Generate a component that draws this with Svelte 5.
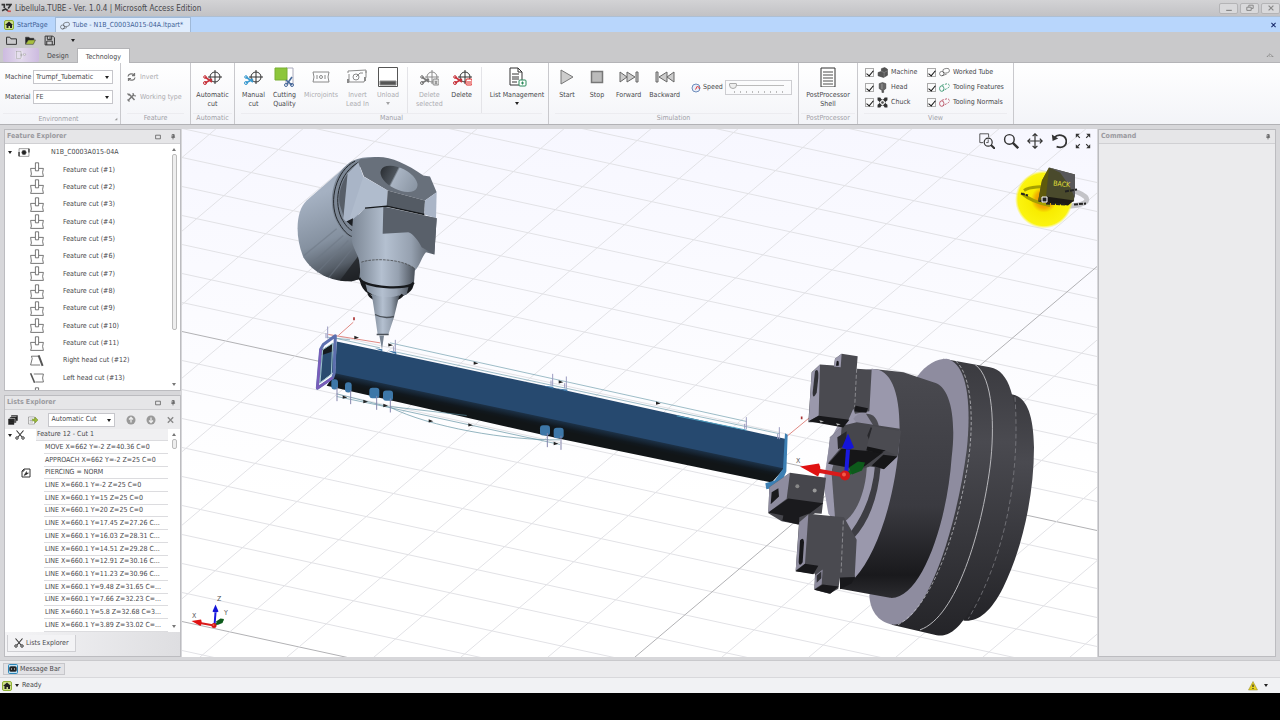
<script lang="ts">
    type Command = { label: string; icon: string; disabled?: boolean; menu?: boolean };

    const target =
        '<circle cx="13" cy="10" r="5"/><path d="M13 3v14M6 10h14"/>';
    const scissors = (c: string) =>
        `<path stroke="${c}" stroke-width="1.6" d="M3 10l7 5M3 16l7-4"/><circle cx="3" cy="10" r="1.3" stroke="${c}"/><circle cx="3" cy="16" r="1.5" stroke="${c}"/>`;

    const icons: Record<string, string> = {
        autoCut: target + scissors("#c8313a"),
        manualCut: target + scissors("#3a9ad0"),
        deleteSelected:
            target + scissors("#777") + '<rect x="14" y="12" width="6" height="6" rx="1" fill="#ddd"/><path d="M16 14l2 3m0-3l-2 3"/>',
        deleteCut:
            target + scissors("#c8313a") + '<rect x="14" y="12" width="6" height="6" rx="1" fill="#fff" stroke="#d22"/><path stroke="#d22" d="M16 14v3m2-3v3"/>',
        quality:
            '<path fill="#fff" stroke="#aab" d="M12 1h7v16h-7z"/><path fill="#8cc63a" stroke="#79ae32" d="M1 1h12v12H1z"/><path stroke="#47699a" stroke-width="1.6" d="M18 10l-5 7M12 13l6 5"/><circle cx="12" cy="18" r="1.5" stroke="#47699a"/><circle cx="18" cy="18" r="1.5" stroke="#47699a"/>',
        micro:
            '<path d="M2 5h16l-1 5 1 5H2l1-5z"/><circle cx="10" cy="10" r="1.500"/><path d="M6 8v4m8-4v4"/>',
        lead: '<path d="M1 6V4l18-1v3M2 7v8h15l2-5V4"/><circle cx="9" cy="10" r="3"/><path d="M9 10l4-4h3"/><path stroke-width="2" d="M1 12v4m17-6v4"/>',
        unload: '<path stroke="#555" fill="#fff" d="M0.500 0.500h19v19h-19z"/><path fill="#555" d="M2 14h16v4H2z"/>',
        list: '<path fill="#fff" d="M3 1h8l4 4v13H3z"/><path d="M11 1v4h4M5 7h7M5 10h7M5 12h7M5 15h5"/><rect x="12" y="13" width="7" height="6" rx="1" fill="#fff" stroke="#2b8a5b"/><path stroke="#2b8a5b" d="M15.500 14.500v3M14 16h3"/>',
        start: '<path fill="#ccc" stroke="#777" d="M4 3l12 7-12 7z"/>',
        stop: '<path fill="#bbb" stroke="#777" stroke-width="1.500" d="M4.500 4.500h11v11h-11z"/>',
        forward: '<path fill="#ccc" stroke="#666" d="M1 5l7 5-7 5zM8 5l8 5-8 5zM17 5h2v10h-2z"/>',
        backward: '<path fill="#ccc" stroke="#666" d="M19 5l-7 5 7 5zM12 5l-8 5 8 5zM1 5h2v10H1z"/>',
        shell: '<path fill="#fff" stroke="#333" d="M3 1h14v19H3z"/><path stroke="#888" stroke-width="1.500" d="M5 5h10M5 8h10M5 11h10M5 14h10M5 17h10"/>',
        house: '<rect x="1" y="1" width="18" height="18" rx="3" fill="#cfe08a" stroke="#8fb135" stroke-width="2"/><path fill="#222" stroke="none" d="M10 3l8 7h-2v6h-4v-4H9v4H5v-6H2z"/>',
        tube: '<rect x="7" y="3" width="12" height="8" rx="4" transform="rotate(-10 12 7)"/><ellipse cx="5" cy="12" rx="4" ry="4"/><path d="M5 16l9-3"/>',
        tubeGreen: '<g stroke="#2e9268" stroke-width="1.500"><ellipse cx="5" cy="12" rx="4" ry="5"/><path d="M5 6l10-3c5 1 5 6 1 8l-9 5" stroke-dasharray="4 2"/></g>',
        tubeRed: '<g stroke="#b5475a" stroke-width="1.500"><ellipse cx="5" cy="12" rx="4" ry="5"/><path d="M5 6l10-3c5 1 5 6 1 8l-9 5" stroke-dasharray="4 2"/></g>',
        folder: '<path stroke-width="1.800" d="M1 16V4h6l2 3h10v10H1z"/>',
        folderOpen: '<path fill="#222" d="M1 16V4h6l2 2h7v3H7z"/><path fill="#a7bf3f" d="M1 17l5-8h13l-4 8z"/>',
        save: '<path stroke-width="1.800" d="M2 2h14l3 3v13H2zM6 2v6h8V2M5 18v-7h10v7M11 4v3"/>',
        appMenu: '<path stroke="#fff" fill="#e6dfee" d="M0 3h12v14H0z"/><rect x="1" y="3" width="9" height="14"/><path d="M8 10h5m-2-3v6"/><path fill="#fff" d="M14 8h6l-3 4z"/>',
        invert: '<g stroke-width="2.500"><path d="M3 9c1-6 9-7 12-3M17 11c-1 6-9 7-12 3"/><path d="M16 2v5h-5M4 18v-5h5"/></g>',
        working: '<path stroke-width="3" d="M4 16L15 5M5 4l11 12"/><path stroke-width="2.500" d="M13 2l1 5 5 1M2 3l4 4M2 15l4 4"/>',
        gauge: '<circle cx="10" cy="10" r="8" fill="#e8eef8" stroke="#6e8cbc" stroke-width="2"/><path stroke="#d33" stroke-width="2" d="M9 13l4-7M15 7l2 5"/>',
        machine: '<path fill="#555" stroke="#333" d="M2 10l6-2V3l6-2 5 3v11l-7 4-10-3z"/><path stroke="#999" d="M8 8l5 2 6-3M13 10v8"/>',
        head: '<path fill="#666" stroke="#333" d="M4 3l6-2 6 2v9l-4 3v4H9v-4l-5-3z"/><path stroke="#ccc" d="M9 3v10"/>',
        chuck: '<path fill="#333" stroke="none" d="M1 1h5l2 3h4l2-3h5v5l-3 2v4l3 2v5h-5l-2-3H8l-2 3H1v-5l3-2V8L1 6z"/><path fill="#fff" stroke="none" d="M10 4l6 6-6 6-6-6z"/><circle cx="10" cy="10" r="2" fill="#555"/>',
        part: '<path fill="#fff" d="M1 3h18v14H1z"/><circle cx="10" cy="10" r="4" fill="#222"/><path stroke-width="3" d="M1 9v8M19 3v7"/>',
        feature: '<path d="M2 8h6V1h4v7h6M8 8v3h4V8M18 8l-1 5 1 5H2l1-3-1-7"/>',
        rightCut: '<path d="M13 4H3l1 3-2 8h12"/><path stroke-width="2.500" d="M12 3l5 13"/>',
        leftCut: '<path d="M6 5h12l-1 5 1 5H8"/><path stroke-width="2" d="M2 4l5 12"/>',
        cutter: '<path stroke-width="2.200" d="M3 1l11 13M17 1L6 14"/><circle cx="4" cy="16" r="2.500" stroke-width="2"/><circle cx="16" cy="16" r="2.500" stroke-width="2"/>',
        pierce: '<path stroke-width="2" d="M6 2h12v16H2V6zM6 2v4H2"/><path fill="#222" stroke-width="1" d="M6 15l5-8v3h4l-4 3z"/>',
        copies: '<path fill="#222" d="M7 1h12v10H7zM4 5h12v10H4zM1 8h11v11H1z"/><path stroke="#eee" d="M4 7h10v8M7 3h10"/>',
        insert: '<path fill="#fff" stroke="#666" d="M1 4h12v14H1z"/><path stroke="#666" d="M3 8h7M3 11h5M3 14h7"/><path fill="#9bb93a" stroke="#72902a" d="M9 8h5V4l6 6-6 6v-4H9z"/>',
        up: '<circle cx="10" cy="10" r="9" fill="#999" stroke="none"/><path stroke="#eee" stroke-width="2.500" d="M10 15V6M6 9l4-4 4 4"/>',
        down: '<circle cx="10" cy="10" r="9" fill="#999" stroke="none"/><path stroke="#eee" stroke-width="2.500" d="M10 5v9M6 11l4 4 4-4"/>',
        cross: '<path stroke-width="3" d="M4 4l12 12M16 4L4 16"/>',
        minimise: '<path stroke-width="3" d="M3 16h14"/>',
        restore: '<path stroke-width="2.500" d="M7 7V3h11v8h-5M2 8h11v8H2z"/>',
        pin: '<path stroke-width="2.500" d="M7 2h7v8H7zM4 11h13M10 11v7M12 2v8"/>',
        float: '<path stroke-width="2.500" d="M2 4h16v12H2z"/>',
        message: '<rect x="1" y="1" width="18" height="18" rx="2" fill="#bfe2f5" stroke="#2b86b8" stroke-width="2"/><rect x="3" y="5" width="14" height="10" rx="3" fill="#222"/><path stroke="#fff" stroke-width="2" d="M6 10h2M12 10h2"/>',
        warning: '<path fill="#e8d21c" stroke="#8d8428" d="M10 1l9 17H1z"/><path stroke-width="2.500" d="M10 7v5M10 14v2"/>',
        zoomWindow: '<path d="M5 12H1V1h11v4"/><circle cx="11.500" cy="11.500" r="5" stroke-width="1.500"/><path stroke-width="2.500" d="M15 15l5 5"/><path d="M11.500 8v4H9"/>',
        zoom: '<circle cx="8" cy="8" r="6" stroke-width="1.800"/><path stroke-width="3" d="M12 12l7 7"/>',
        pan: '<path stroke-width="1.500" d="M10 1v18M1 10h18M7 4l3-3 3 3M7 16l3 3 3-3M4 7l-3 3 3 3M16 7l3 3-3 3"/>',
        rotate: '<path stroke-width="2.200" d="M4 6c5-6 14-3 15 3s-4 11-12 8"/><path fill="#333" stroke="none" d="M1 2l1 8 7-3z"/>',
        fit: '<path stroke-width="1.500" d="M6 6L3 3m11 3l3-3M6 14l-3 3m11-3l3 3"/><path fill="#333" stroke="none" d="M1 1h5L1 6zM19 1v5l-5-5zM1 19v-5l5 5zM19 19h-5l5-5z"/>',
    };

    const manual: Command[][] = [
        [
            { label: "Manual\ncut", icon: "manualCut" },
            { label: "Cutting\nQuality", icon: "quality" },
            { label: "Microjoints", icon: "micro", disabled: true },
            { label: "Invert\nLead In", icon: "lead", disabled: true },
            { label: "Unload", icon: "unload", disabled: true, menu: true },
        ],
        [
            { label: "Delete\nselected", icon: "deleteSelected", disabled: true },
            { label: "Delete", icon: "deleteCut" },
        ],
        [{ label: "List Management", icon: "list", menu: true }],
    ];
    const simulation: Command[] = [
        { label: "Start", icon: "start" },
        { label: "Stop", icon: "stop" },
        { label: "Forward", icon: "forward" },
        { label: "Backward", icon: "backward" },
    ];
    const views = [
        { label: "Machine", icon: "machine" },
        { label: "Head", icon: "head" },
        { label: "Chuck", icon: "chuck" },
        { label: "Worked Tube", icon: "tube" },
        { label: "Tooling Features", icon: "tubeGreen" },
        { label: "Tooling Normals", icon: "tubeRed" },
    ];

    const features = [
        ...Array.from({ length: 11 }, (_, i) => ({ label: `Feature cut (#${i + 1})`, icon: "feature" })),
        { label: "Right head cut (#12)", icon: "rightCut" },
        { label: "Left head cut (#13)", icon: "leftCut" },
    ];

    const steps = [
        "MOVE X=662 Y=-2 Z=40.36 C=0",
        "APPROACH X=662 Y=-2 Z=25 C=0",
        "PIERCING = NORM",
        "LINE X=660.1 Y=-2 Z=25 C=0",
        "LINE X=660.1 Y=15 Z=25 C=0",
        "LINE X=660.1 Y=20 Z=25 C=0",
        "LINE X=660.1 Y=17.45 Z=27.26 C...",
        "LINE X=660.1 Y=16.03 Z=28.31 C...",
        "LINE X=660.1 Y=14.51 Z=29.28 C...",
        "LINE X=660.1 Y=12.91 Z=30.16 C...",
        "LINE X=660.1 Y=11.23 Z=30.96 C...",
        "LINE X=660.1 Y=9.48 Z=31.65 C=...",
        "LINE X=660.1 Y=7.66 Z=32.23 C=...",
        "LINE X=660.1 Y=5.8 Z=32.68 C=3...",
        "LINE X=660.1 Y=3.89 Z=33.02 C=...",
    ];

    const viewTools = [
        { label: "Zoom window", icon: "zoomWindow" },
        { label: "Zoom", icon: "zoom" },
        { label: "Pan", icon: "pan" },
        { label: "Rotate", icon: "rotate" },
        { label: "Fit", icon: "fit" },
    ];

    // floor grid: two families of parallel lines
    const shallow = Array.from({ length: 24 }, (_, i) => 331 + (i - 12) * 29);
    const steep = Array.from({ length: 20 }, (_, i) => 175 + (i - 2) * 87);

    // small blue joints under the tube, and the normals and arrows along the path
    const joints = [[104, 222, 10], [145, 231, 10], [223, 248, 15], [264, 256, 15], [735, 360, 15], [776, 368, 15]];
    const normals = [[286, 88], [758, 190], [799, 198], [1339, 320], [1438, 350], [83, 48]];
    const arrows = [[170, 81], [272, 103], [528, 158], [783, 214], [1075, 278], [135, 260], [197, 273], [257, 285], [393, 331], [512, 343], [768, 399]];

    let speed = $state(5);
</script>

{#snippet icon(name: string)}
    <svg class="icon" viewBox="0 0 20 20" aria-hidden="true">{@html icons[name]}</svg>
{/snippet}

{#snippet command(c: Command)}
    <button class="command" disabled={c.disabled}>
        {@render icon(c.icon)}
        <span>{c.label}</span>
        {#if c.menu}<i class="caret"></i>{/if}
    </button>
{/snippet}

{#snippet triad(x: number, y: number, s: number)}
    <g transform={`translate(${x} ${y}) scale(${s})`}>
        <path d="M0 0L18-11" stroke="#0a6a1a" stroke-width="4" />
        <path d="M4-8l9-6 7 1-3 8-10 4z" fill="#0d5a1b" />
        <path d="M1 0L3-26" stroke="#1a1ae0" stroke-width="4" />
        <path d="M-3-28L3-42 9-28Q3-24-3-28z" fill="#1414d8" />
        <path d="M0 0L-28-5" stroke="#d81a1a" stroke-width="4" />
        <path d="M-26-12L-45-9-27 1Q-23-6-26-12z" fill="#e01212" />
        <circle r="5" fill="#d01818" />
        <circle cx="-1" cy="-1" r="2" fill="#f05a4a" />
    </g>
{/snippet}

<div class="app">
    <header class="title">
        <svg class="logo" viewBox="0 0 20 20" aria-hidden="true">
            <path d="M1 3h5v6M9 3h9l-5 7M2 14l6-3 5 3" stroke="#333" stroke-width="3" fill="none" />
            <path d="M12 15h6" stroke="#c55" stroke-width="3" />
        </svg>
        <span>Libellula.TUBE - Ver. 1.0.4 | Microsoft Access Edition</span>
        <div class="window-buttons">
            <button aria-label="Minimise">{@render icon("minimise")}</button>
            <button aria-label="Restore">{@render icon("restore")}</button>
            <button aria-label="Close">{@render icon("cross")}</button>
        </div>
    </header>

    <nav class="documents">
        <a href="#start">{@render icon("house")}StartPage</a>
        <a href="#part" class="open">{@render icon("tube")}Tube - N1B_C0003A015-04A.ltpart*</a>
        <button aria-label="Close document">{@render icon("cross")}</button>
    </nav>

    <div class="quick">
        <button aria-label="New">{@render icon("folder")}</button>
        <button aria-label="Open">{@render icon("folderOpen")}</button>
        <button aria-label="Save">{@render icon("save")}</button>
        <button aria-label="More"><i class="caret"></i></button>
    </div>

    <nav class="tabs">
        <button class="app-menu" aria-label="Application menu">{@render icon("appMenu")}</button>
        <a href="#design">Design</a>
        <a href="#technology" class="current">Technology</a>
        <svg class="collapse" viewBox="0 0 10 6" aria-hidden="true"><path d="M1 5l4-4 4 4H7L5 3 3 5z" /></svg>
    </nav>

    <div class="ribbon">
        <section class="environment">
            <div class="body fields">
                <label for="machine">Machine</label>
                <div class="select"><select id="machine"><option>Trumpf_Tubematic</option></select></div>
                <label for="material">Material</label>
                <div class="select"><select id="material"><option>FE</option></select></div>
            </div>
            <h2><span>Environment</span><svg class="launcher" viewBox="0 0 6 6" aria-hidden="true"><path d="M5 1v4H1z" /></svg></h2>
        </section>
        <section class="feature">
            <div class="body stack">
                <button disabled>{@render icon("invert")}Invert</button>
                <button disabled>{@render icon("working")}Working type</button>
            </div>
            <h2>Feature</h2>
        </section>
        <section class="automatic">
            <div class="body">{@render command({ label: "Automatic\ncut", icon: "autoCut" })}</div>
            <h2>Automatic</h2>
        </section>
        <section class="manual">
            <div class="body">
                {#each manual as part}
                    <div class="part">
                        {#each part as c}{@render command(c)}{/each}
                    </div>
                {/each}
            </div>
            <h2>Manual</h2>
        </section>
        <section class="simulation">
            <div class="body">
                {#each simulation as c}{@render command(c)}{/each}
                <label class="speed">
                    {@render icon("gauge")}Speed
                    <input type="range" min="0" max="100" bind:value={speed} />
                </label>
            </div>
            <h2>Simulation</h2>
        </section>
        <section class="post">
            <div class="body">{@render command({ label: "PostProcessor\nShell", icon: "shell" })}</div>
            <h2>PostProcessor</h2>
        </section>
        <section class="view">
            <div class="body checks">
                {#each views as v}
                    <label><input type="checkbox" checked />{@render icon(v.icon)}{v.label}</label>
                {/each}
            </div>
            <h2>View</h2>
        </section>
    </div>

    <main>
        <aside class="left">
            <section class="panel">
                <h3>Feature Explorer<span>{@render icon("float")}{@render icon("pin")}</span></h3>
                <div class="box">
                    <div class="tree">
                        <ul>
                            <li class="root"><i class="caret"></i>{@render icon("part")}<span>N1B_C0003A015-04A</span></li>
                            {#each features as f}
                                <li>{@render icon(f.icon)}<span>{f.label}</span></li>
                            {/each}
                        </ul>
                        <div class="cut-off">{@render icon("feature")}</div>
                    </div>
                    <div class="scroll"><i class="caret up"></i><b class="long"></b><i class="caret"></i></div>
                </div>
            </section>

            <section class="panel">
                <h3>Lists Explorer<span>{@render icon("float")}{@render icon("pin")}</span></h3>
                <div class="tools">
                    <button aria-label="Copy">{@render icon("copies")}</button>
                    <button aria-label="Insert">{@render icon("insert")}</button>
                    <div class="select"><select aria-label="Cut list"><option>Automatic Cut</option></select></div>
                    <button aria-label="Move up">{@render icon("up")}</button>
                    <button aria-label="Move down">{@render icon("down")}</button>
                    <button aria-label="Remove">{@render icon("cross")}</button>
                </div>
                <div class="box">
                    <ul class="steps">
                        <li class="heading"><i class="caret"></i>{@render icon("cutter")}<span>Feature 12 - Cut 1</span></li>
                        {#each steps as s, i}
                            <li>{#if i == 2}{@render icon("pierce")}{/if}<span>{s}</span></li>
                        {/each}
                    </ul>
                    <div class="scroll"><i class="caret up"></i><b></b><i class="caret"></i></div>
                </div>
                <div class="panel-tabs"><a href="#lists">{@render icon("cutter")}Lists Explorer</a></div>
            </section>
        </aside>

        <div class="canvas">
            <svg class="scene" viewBox="182 128 915 529" preserveAspectRatio="xMidYMid slice">
                <defs>
                    <linearGradient id="sky" x2="0" y2="1"><stop stop-color="#f7f7ff" /><stop offset=".7" stop-color="#fff" /></linearGradient>
                    <linearGradient id="barrel" gradientUnits="userSpaceOnUse" x1="90" y1="170" x2="190" y2="430">
                        <stop stop-color="#a5b1c2" /><stop offset=".5" stop-color="#8591a0" /><stop offset=".8" stop-color="#565e68" /><stop offset="1" stop-color="#1e2125" />
                    </linearGradient>
                    <linearGradient id="steel"><stop stop-color="#7c8795" /><stop offset=".4" stop-color="#b4c0d0" /><stop offset=".7" stop-color="#96a1b0" /><stop offset="1" stop-color="#4a515a" /></linearGradient>
                    <linearGradient id="bore"><stop stop-color="#2d3136" /><stop offset=".35" stop-color="#4d545c" /><stop offset=".4" stop-color="#a9b4c3" /><stop offset="1" stop-color="#8a95a3" /></linearGradient>
                    <linearGradient id="under" gradientUnits="userSpaceOnUse" x1="700" y1="295" x2="690" y2="342"><stop stop-color="#26496f" /><stop offset=".8" stop-color="#11181e" /><stop offset="1" stop-color="#111517" /></linearGradient>
                    <linearGradient id="drum" x2="0" y2="1"><stop stop-color="#4a4a50" /><stop offset=".6" stop-color="#3a3a40" /><stop offset=".9" stop-color="#19191c" /><stop offset="1" stop-color="#2c2c30" /></linearGradient>
                    <linearGradient id="rim" x2="0" y2="1"><stop stop-color="#3a3a3f" /><stop offset=".3" stop-color="#4a4a50" /><stop offset="1" stop-color="#242428" /></linearGradient>
                    <radialGradient id="spot"><stop stop-color="#e8750a" /><stop offset=".3" stop-color="#f0b000" /><stop offset=".45" stop-color="#f8ec00" /><stop offset=".9" stop-color="#fbf410" /><stop offset="1" stop-color="#fbf53a" stop-opacity="0" /></radialGradient>
                </defs>
                <path d="M182 128h915v529H182z" fill="url(#sky)" />
                {#each shallow as y, i}
                    <path d={`M182 ${y}l915 199`} stroke={i == 12 || i == 22 ? "#b2b2b5" : "#e2e2e6"} />
                {/each}
                {#each steep as x, i}
                    <path d={`M${x - 420} 665l840-710`} stroke={i == 12 ? "#b2b2b5" : "#e2e2e6"} />
                {/each}

                <!-- tube -->
                <g transform="translate(300 310) scale(.33333)" stroke-width="3" fill="none">
                    <path d="M80 80L150 88M270 97L1340 333M290 125L1440 370M100 82L240 112" stroke="#6d9cab" stroke-width="2" />
                    <path d="M85 72L240 97M1460 378L1540 312M115 75L160 35" stroke="#e08a84" />
                    <path d="M110 93L730 225 1455 385V480L105 195z" fill="#26496f" />
                    <path d="M105 188L1453 474 1415 516 790 387 80 226z" fill="url(#under)" />
                    <path d="M225 113l22 3v6zM265 121l24 3v7zM730 226l30 3v6zM770 234l32 3v6z" fill="#3d77a8" />
                    <path d="M1130 316l210 43" stroke="#4f9fc0" />
                    <path d="M1455 368l8 5-4 110-20 45-40 8-3-18 28-8 25-35z" fill="#3c7fb3" />
                    <path d="M66 118L100 98V185L58 218z" fill="#2a4c70" />
                    <path d="M66 118L100 98V122L64 134z" fill="#151a1f" />
                    <path d="M106 76L70 102 62 116 52 233 98 202 102 190z" stroke="#5c6fae" stroke-width="9" stroke-linejoin="round" />
                    <path d="M62 116L52 233 98 202" stroke="#7a5cba" stroke-width="7" stroke-linejoin="round" />
                    <path d="M98 98L68 118 60 217 94 192z" stroke="#9fc6cf" />
                    <path d="M110 250L270 290C390 350 620 390 780 388M110 258L240 285 780 402M270 288L500 315" stroke="#5d8fa0" stroke-width="2" />
                    {#each joints as [x, y, r]}
                        <rect x={x - r} y={y - 16} width={r * 2} height="31" rx="9" fill="#3d77a8" />
                        <path d={`M${x + 7} ${y + 8}v42`} stroke="#8586ad" />
                    {/each}
                    {#each normals as [x, y]}
                        <path d={`M${x} ${y}v36m-5-16v15`} stroke="#9a9bc0" />
                    {/each}
                    {#each arrows as [x, y]}
                        <path d={`M${x - 7} ${y - 5}l14 6-14 4z`} fill="#222" />
                    {/each}
                    <path d="M162 20v9M1505 318v8" stroke="#a33" stroke-width="5" />
                </g>

                <!-- cutting head -->
                <g transform="translate(280 140) scale(.33333)">
                    <path d="M215 62L80 180C46 212 45 290 70 350 100 400 160 425 215 422L242 415 240 260z" fill="url(#barrel)" />
                    <path d="M72 345L170 265M88 375L190 285M112 396L205 300M145 413L220 320" stroke="#6d7784" stroke-width="4" opacity=".5" />
                    <path d="M180 420L236 345 242 415 215 422z" fill="#1f2226" opacity=".8" />
                    <path d="M220 60C160 90 140 180 168 240 185 275 205 290 218 292L230 250 205 95 300 50C270 48 240 50 220 60z" fill="#7c8795" />
                    <path d="M240 60C195 95 170 150 180 195L192 230 205 98 290 50z" fill="#575e68" />
                    <path d="M225 62C168 90 145 180 172 238 188 270 205 285 216 288M235 66C180 95 158 175 184 232 196 255 206 265 216 270" fill="none" stroke="#24282d" stroke-width="3" />
                    <path d="M235 65L240 56 290 50C330 48 380 70 430 105L450 108 470 155 435 180 323 150 252 108z" fill="#68707b" />
                    <ellipse cx="357" cy="115" rx="60" ry="32" transform="rotate(27 357 115)" fill="url(#bore)" />
                    <path d="M235 65L203 98 190 235 205 250 255 203 250 108z" fill="#a9b5c7" />
                    <path d="M250 108L323 150 321 198 255 203 205 245z" fill="#b0bccd" />
                    <path d="M323 150L435 180 433 222 320 198z" fill="#545b64" />
                    <path d="M435 180L470 155 468 233 433 222z" fill="#aab5c7" />
                    <path d="M255 203L310 198 470 233 463 342 438 335C425 350 420 375 405 390L240 385C240 340 215 325 215 290L218 240z" fill="url(#steel)" />
                    <path d="M310 198L470 233 463 342 425 320C415 300 400 280 385 275L308 280z" fill="#59606a" />
                    <path d="M255 203L320 197 433 222" fill="none" stroke="#15181b" stroke-width="4" />
                    <path d="M199 243l20-10-2 24z" fill="#1b1e22" />
                    <path d="M238 408C240 452 270 474 320 466 370 475 400 458 402 426z" fill="#17191c" />
                    <path d="M250 405L392 412 380 462C345 480 290 475 262 452z" fill="url(#steel)" />
                    <path d="M244 365C280 352 370 355 405 385L402 425C390 445 250 440 238 412z" fill="url(#steel)" />
                    <path d="M238 412C246 444 392 450 401 426" fill="none" stroke="#17191c" stroke-width="7" />
                    <path d="M244 365C280 352 370 355 405 385" fill="none" stroke="#333" stroke-width="2" stroke-dasharray="8 3" />
                    <path d="M266 458C270 485 350 490 368 462" fill="none" stroke="#17191c" stroke-width="8" />
                    <path d="M275 460C300 472 335 472 358 464L342 530 325 582H293L285 525z" fill="url(#steel)" />
                    <path d="M285 522Q310 536 342 528M290 582h36" fill="none" stroke="#4a5058" stroke-width="4" />
                    <path d="M298 585h14l-6 42z" fill="#778392" />
                </g>

                <!-- chuck -->
                <g transform="translate(760 340) scale(.33333)">
                    <path d="M740 160C790 160 820 200 822 320 822 480 780 640 730 740 690 820 650 845 610 840z" fill="url(#rim)" />
                    <path d="M550 55L690 80C750 90 770 180 770 300 765 500 700 700 630 810 590 875 560 890 530 884L395 853z" fill="url(#rim)" />
                    <path d="M765 170C780 400 740 640 625 835" fill="none" stroke="#88888e" stroke-width="2" stroke-dasharray="14 8" />
                    <path d="M645 72C700 110 705 260 690 380 665 570 590 830 480 868" fill="none" stroke="#b8b8bc" stroke-width="3" />
                    <path d="M470 110C500 70 530 55 560 55 622 68 635 190 620 330 590 560 500 850 400 853 350 845 330 805 328 765z" fill="#8e8c9f" />
                    <path d="M588 62C640 110 640 260 625 360 595 560 520 800 410 855" fill="none" stroke="#d0d0d4" stroke-width="2" stroke-dasharray="10 6" />
                    <path d="M335 85L430 95 520 125C570 135 590 230 575 350 560 560 480 780 390 772L240 745V500z" fill="url(#drum)" />
                    <path d="M320 88C390 70 425 150 418 300 405 480 350 640 285 712L250 600 230 550 205 520 190 430 210 300z" fill="#9a98ac" />
                    <path d="M215 400C215 350 260 330 320 350 325 430 295 520 250 545L225 530z" fill="#55555c" />
                    <path d="M345 375Q335 500 258 592L280 595Q350 520 362 378z" fill="#3d3d43" />
                    <path d="M280 235C300 205 340 215 355 255L300 260z" fill="#8d8b9e" />
                    <path d="M318 220Q350 220 357 260L340 255z" fill="#4b4b51" />
                    <path d="M210 290L250 255 290 245 420 265 412 348 372 385 330 378 298 388 205 370z" fill="#46464c" />
                    <path d="M205 370L245 325 370 335 300 388zM335 375l35-32 42 5-40 38z" fill="#161618" />
                    <path d="M210 290L245 258 240 325 200 372z" fill="#8e8c9f" />
                    <path d="M232 290l28-18-2 42-24 12zM322 285l10-25 10 5-12 40z" fill="#27272b" />
                    <path d="M320 318l18-62 45 10 40 5-10 75-38-16-15 4z" fill="#4b4b51" />
                    <path d="M322 318l55 12-20 8-38-8z" fill="#141416" />
                    <path d="M245 40L293 47 290 85 335 88 328 212 285 220 280 205 262 245 145 245 155 95 180 72 222 75 225 55z" fill="#4a4a50" />
                    <path d="M180 72L155 97 146 242 176 225zM245 40L225 55 222 78 242 80z" fill="#9a98ac" />
                    <path d="M165 92q12-12 10 20l-5 45q-12 22-12 0z" fill="#303035" />
                    <path d="M230 62q8-6 6 14h-8zM146 242l30-16 92 12-18 23zM284 195l40 8-5 14-35-4z" fill="#17171a" />
                    <path d="M290 85L284 200" stroke="#a9a9ad" stroke-width="2" stroke-dasharray="12 6" />
                    <path d="M178 239l14 3-10 4zM228 248l14 3-10 4z" fill="#bbb" />
                    <path d="M90 397L198 412 185 520 165 518 115 552 65 542 25 518 28 440z" fill="#46464c" />
                    <path d="M90 397L28 440 25 516 80 475z" fill="#8e8c9f" />
                    <path d="M35 455l20-12 2 25-25 23zM25 516l60-42 105 14-50 38 3 12-28 14-48-12 3-15z" fill="#1a1a1d" />
                    <circle cx="112" cy="437" r="6" fill="#888" /><circle cx="164" cy="450" r="6" fill="#999" />
                    <path d="M145 520L252 530 290 598 284 710 240 712 235 745 208 760 163 748 165 700 107 692 118 530z" fill="#4a4a50" />
                    <path d="M145 522L118 545 107 690 135 670zM188 687l-22 17-3 42 22-15z" fill="#8e8c9f" />
                    <path d="M120 600q10-12 12 5l-4 60q-10 15-12 0zM107 692l28-22 40 6-15 25zM163 748l25-16 48 6-25 22zM240 712l45-2-10 18-35 18z" fill="#18181b" />
                    <path d="M170 705l14-12v20l-14 14z" fill="#303035" />
                    <path d="M250 540L243 700" stroke="#a9a9ad" stroke-width="2" stroke-dasharray="12 6" />
                </g>
                {@render triad(845, 475, 1)}
                <text x="796" y="462">X</text>

                {@render triad(214, 625, 0.5)}
                <text x="192" y="617">X</text>
                <text x="217" y="600">Z</text>
                <text x="224" y="614">Y</text>

                <!-- orientation cube -->
                <ellipse cx="1055" cy="196" rx="32" ry="9" fill="none" stroke="#c4c4c8" stroke-width="5" transform="rotate(6 1055 196)" />
                <circle cx="1044" cy="199" r="29" fill="url(#spot)" />
                <path d="M1024 190C1030 186 1036 187 1042 186M1022 193C1030 200 1040 203 1050 205" fill="none" stroke="#a5a000" stroke-width="3" />
                <path d="M1049 167L1075 174 1074 201 1043 202 1038 201 1042 180z" fill="#4a4a2c" />
                <path d="M1049 167L1075 174V198L1070 186 1060 172z" fill="#58585a" />
                <path d="M1049 167L1042 180 1038 201 1046 196z" fill="#5f5a0c" />
                <path d="M1039 201L1046 196 1074 200 1068 205z" fill="#1c1a14" />
                <path d="M1065 191l12-2M1021 193l7 2M1046 203l20 1M1074 204l12-1" stroke="#222" stroke-width="2" stroke-dasharray="4 1" />
                <path d="M1042 196.500h5v5h-5z" fill="#222" stroke="#fff" />
                <text class="back" x="1053" y="185" transform="rotate(6 1053 185)">BACK</text>
            </svg>
            <div class="view-tools">
                {#each viewTools as t}
                    <button aria-label={t.label}>{@render icon(t.icon)}</button>
                {/each}
            </div>
        </div>

        <aside class="right">
            <section class="panel">
                <h3>Command<span>{@render icon("pin")}</span></h3>
            </section>
        </aside>
    </main>

    <div class="message"><a href="#messages">{@render icon("message")}Message Bar</a></div>
    <footer>
        {@render icon("house")}<i class="caret"></i><span>Ready</span>
        <div class="alerts">{@render icon("warning")}<i class="caret"></i></div>
    </footer>
</div>

<style>
    :global(body) {
        background: #000;
    }

    .app {
        display: flex;
        flex-direction: column;
        box-sizing: border-box;
        height: 100vh;
        padding-bottom: 27px;
        background: #000;
        color: #47474b;
        font: 7px/9px "DejaVu Sans Condensed", "DejaVu Sans", sans-serif;
    }

    .app :global(*) {
        box-sizing: border-box;
    }

    button,
    select,
    input {
        margin: 0;
        padding: 0;
        border: 0;
        background: none;
        color: inherit;
        font: inherit;
    }

    a {
        color: inherit;
        text-decoration: none;
    }

    ul,
    h2,
    h3 {
        margin: 0;
        padding: 0;
        list-style: none;
        font: inherit;
    }

    .icon {
        flex: none;
        display: block;
        width: 10px;
        height: 10px;
        fill: none;
        stroke: #333;
    }

    .caret {
        flex: none;
        border: 2px solid transparent;
        border-top: 3px solid #222;
        border-bottom: 0;
    }

    .caret.up {
        border-top: 0;
        border-bottom: 3px solid #777;
    }

    .title {
        display: flex;
        align-items: center;
        height: 16px;
        padding-left: 1px;
        background: linear-gradient(#d3d3d5, #c2c2c5);
        font-size: 8px;
    }

    .logo {
        width: 11px;
        height: 11px;
        margin-right: 3px;
    }

    .window-buttons {
        display: flex;
        gap: 2px;
        margin-left: auto;
    }

    .window-buttons button {
        display: grid;
        place-items: center;
        width: 19px;
        height: 11px;
        border: 1px solid #b4b4b6;
        border-radius: 2px;
        background: #d9d9db;
    }

    .window-buttons .icon {
        width: 8px;
        height: 8px;
        stroke: #888;
    }

    .documents {
        display: flex;
        align-items: stretch;
        height: 16px;
        border-top: 1px solid #aebfd3;
        background: #b8d6fc;
        color: #3d5f96;
    }

    .documents a {
        display: flex;
        align-items: center;
        gap: 3px;
        padding: 1px 7px 0 4px;
    }

    .documents a.open {
        border: 1px solid #9fb9d8;
        border-bottom: 0;
        background: #dfecfd;
    }

    .documents button {
        display: grid;
        place-items: center;
        width: 14px;
        margin-left: auto;
    }

    .documents button .icon {
        width: 7px;
        stroke: #1a2c6c;
    }

    .quick {
        display: flex;
        align-items: center;
        gap: 8px;
        height: 16px;
        padding: 0 6px;
        background: #c9c9cb;
    }

    .quick button:last-child {
        margin-left: 8px;
    }

    .quick .icon {
        width: 11px;
        height: 11px;
    }

    .quick .caret {
        display: block;
    }

    .tabs {
        display: flex;
        align-items: stretch;
        height: 15px;
        padding-left: 3px;
        border-bottom: 1px solid #b4b4b7;
        background: #c9c9cb;
    }

    .tabs a {
        display: flex;
        align-items: center;
        padding: 2px 8px 0;
    }

    .tabs a.current {
        margin-bottom: -1px;
        border: 1px solid #b4b4b7;
        border-bottom: 0;
        background: #fff;
    }

    .app-menu {
        display: grid;
        place-items: center;
        width: 36px;
        border-radius: 2px;
        background: linear-gradient(90deg, #cdbbe0, #e2d9ec, #cdbbe0);
    }

    .app-menu .icon {
        width: 14px;
        stroke: #999;
    }

    .collapse {
        align-self: center;
        width: 8px;
        margin: 0 6px 0 auto;
        fill: #fff;
        stroke: #777;
    }

    .ribbon {
        display: flex;
        height: 62px;
        padding-left: 1px;
        border-bottom: 1px solid #b2b2b6;
        background: linear-gradient(#fff, #f3f4f8);
    }

    .ribbon section {
        display: flex;
        flex-direction: column;
        border-right: 1px solid #c9c9cd;
    }

    .ribbon .body {
        display: flex;
        flex: 1;
        padding: 4px 3px 0;
    }

    .ribbon h2 {
        height: 11px;
        margin: 0 6px;
        border-top: 1px solid #ececf0;
        color: #a0a0a6;
        text-align: center;
    }

    .ribbon .environment {
        width: 120px;
    }

    .ribbon .environment h2 {
        display: flex;
        align-items: center;
        margin: 0 2px;
    }

    .environment h2 span {
        flex: 1;
    }

    .launcher {
        width: 4px;
        fill: #999;
    }

    .ribbon .feature {
        width: 70px;
    }

    .ribbon .automatic {
        width: 44px;
    }

    .ribbon .automatic h2,
    .ribbon .post h2 {
        margin: 0 2px;
    }

    .ribbon .manual {
        width: 314px;
    }

    .ribbon .simulation {
        width: 250px;
    }

    .ribbon .post {
        width: 59px;
    }

    .ribbon .view {
        width: 156px;
    }

    .ribbon .fields {
        display: grid;
        grid-template-columns: auto 80px;
        grid-auto-rows: 14px;
        align-items: center;
        justify-content: space-between;
        gap: 6px 0;
        padding: 7px 7px 0 4px;
    }

    .select {
        position: relative;
        height: 14px;
        border: 1px solid #c6c6cb;
        background: #fff;
    }

    .select select {
        display: block;
        width: 100%;
        height: 100%;
        padding-left: 2px;
        appearance: none;
    }

    .select::after {
        content: "";
        position: absolute;
        top: 5px;
        right: 3px;
        border: 2px solid transparent;
        border-top: 3px solid #222;
        border-bottom: 0;
        pointer-events: none;
    }

    .ribbon .stack {
        flex-direction: column;
        gap: 10px;
        padding: 9px 5px 0;
    }

    .stack button {
        display: flex;
        align-items: center;
        gap: 3px;
        color: #acacb0;
    }

    .stack .icon {
        width: 11px;
        stroke: #777;
    }

    .command {
        display: flex;
        flex: none;
        flex-direction: column;
        align-items: center;
        min-width: 30px;
        height: 42px;
        padding: 0 4px;
        text-align: center;
        white-space: pre;
    }

    .command .icon {
        width: 20px;
        height: 20px;
        margin-bottom: 4px;
    }

    .command:disabled {
        color: #acacb0;
    }

    .command:disabled .icon {
        stroke: #8a8a8a;
    }

    .command:disabled .caret {
        opacity: 0.4;
    }

    .command .caret {
        margin-top: 2px;
    }

    .automatic .body,
    .post .body {
        justify-content: center;
        padding: 4px 0 0;
    }

    .part {
        display: flex;
        flex: none;
    }

    .part + .part {
        margin-left: 4px;
        padding-left: 4px;
        border-left: 1px solid #e4e4e8;
    }

    .speed {
        display: flex;
        align-items: center;
        align-self: flex-start;
        gap: 2px;
        margin: 13px 0 0 7px;
    }

    .speed input {
        width: 67px;
        height: 15px;
        border: 1px solid #cdcdd1;
        background:
            repeating-linear-gradient(90deg, #bbb 0 1px, transparent 1px 6px) 8px 10px / 50px 2px no-repeat,
            linear-gradient(#bbb, #bbb) 6px 4px / 52px 1px no-repeat;
        appearance: none;
    }

    .speed input::-webkit-slider-thumb {
        width: 8px;
        height: 6px;
        margin-bottom: 4px;
        border: 1px solid #aaa;
        border-radius: 1px 1px 4px 4px;
        background: #eee;
        appearance: none;
    }

    .ribbon .checks {
        display: grid;
        grid-template-rows: repeat(3, 11px);
        grid-auto-flow: column;
        grid-template-columns: 62px auto;
        align-content: start;
        gap: 4px 0;
        padding: 4px 4px 0 7px;
    }

    .checks label {
        display: flex;
        align-items: center;
        gap: 3px;
    }

    .checks .icon {
        width: 11px;
        height: 11px;
    }

    .checks input {
        position: relative;
        width: 9px;
        height: 9px;
        border: 1px solid #aaa;
        background: #fafafa;
        appearance: none;
    }

    .checks input:checked::after {
        content: "";
        position: absolute;
        top: 0;
        left: 2px;
        width: 3px;
        height: 6px;
        border: solid #111;
        border-width: 0 1px 1px 0;
        transform: rotate(40deg);
    }

    main {
        display: flex;
        flex: 1;
        gap: 1px;
        min-height: 0;
        padding: 4px 4px 3px;
        background: #d7d7da;
    }

    .left {
        display: grid;
        grid-template-rows: minmax(0, 1fr) minmax(0, 1fr);
        gap: 4px;
        width: 177px;
    }

    .right {
        display: grid;
        width: 178px;
    }

    .panel {
        display: flex;
        flex-direction: column;
        min-height: 0;
        border: 1px solid #bcbcc0;
        background: #ebebed;
    }

    .panel h3 {
        display: flex;
        flex: none;
        align-items: center;
        height: 14px;
        padding: 0 4px 0 2px;
        border-bottom: 1px solid #d0d0d3;
        background: #e6e6e8;
        color: #9a9a9f;
        font-weight: bold;
    }

    .panel h3 span {
        display: flex;
        gap: 9px;
        margin-left: auto;
    }

    .panel h3 .icon {
        width: 6px;
        height: 6px;
        stroke: #555;
    }

    .box {
        display: flex;
        flex: 1;
        min-height: 0;
        background: #fff;
    }

    .tree {
        display: flex;
        flex: 1;
        flex-direction: column;
    }

    .tree ul,
    .steps {
        display: grid;
        flex: 1;
        grid-auto-rows: minmax(0, 1fr);
        min-height: 0;
    }

    .tree li {
        display: flex;
        align-items: center;
        gap: 17px;
        min-height: 0;
        padding-left: 23px;
    }

    .tree li .icon,
    .cut-off .icon {
        width: 18px;
        height: 16px;
        stroke: #555;
    }

    .tree li.root {
        gap: 4px;
        padding-left: 3px;
    }

    .tree .root .icon {
        width: 16px;
        height: 11px;
    }

    .tree .root span {
        margin-left: 15px;
    }

    .tree .cut-off {
        flex: none;
        height: 3px;
        padding-left: 23px;
        overflow: hidden;
    }

    .scroll {
        display: flex;
        flex-direction: column;
        align-items: center;
        gap: 3px;
        width: 12px;
        padding: 4px 0;
    }

    .scroll b {
        width: 5px;
        height: 10px;
        border: 1px solid #bbb;
        border-radius: 2px;
        background: #eee;
    }

    .scroll b.long {
        height: 74%;
    }

    .scroll .caret:last-child {
        margin-top: auto;
        border-top-color: #777;
    }

    .tools {
        display: flex;
        flex: none;
        align-items: center;
        justify-content: space-between;
        height: 19px;
        padding: 0 5px 0 3px;
    }

    .tools .select {
        width: 67px;
    }

    .tools button:last-child .icon {
        width: 9px;
        stroke: #888;
    }

    .steps li {
        display: flex;
        align-items: center;
        min-height: 0;
        padding-left: 16px;
    }

    .steps li span {
        flex: 1;
        padding-left: 1px;
        border-bottom: 1px solid #dcdcdf;
        line-height: 11px;
        white-space: nowrap;
    }

    .steps li:not(.heading):not(:has(.icon)) {
        padding-left: 39px;
    }

    .steps li .icon {
        margin-right: 13px;
    }

    .steps li.heading {
        gap: 3px;
        padding-left: 3px;
    }

    .steps li.heading .icon {
        margin-right: 8px;
    }

    .steps li.heading span {
        background: #f0f0f2;
    }

    .panel-tabs {
        flex: none;
        display: flex;
        height: 24px;
        padding: 3px 2px 4px;
        background: linear-gradient(90deg, #f4f4f6, #dedee1);
    }

    .panel-tabs a {
        display: flex;
        align-items: center;
        gap: 2px;
        padding: 0 6px;
        border: 1px solid #cfcfd3;
        border-top: 0;
        background: #f3f3f5;
    }

    .canvas {
        position: relative;
        flex: 1;
        min-width: 0;
        background: #fff;
    }

    .scene {
        display: block;
        width: 100%;
        height: 100%;
    }

    .scene text {
        fill: #555;
    }

    .scene .back {
        fill: #e8e23a;
    }

    .view-tools {
        position: absolute;
        top: 4px;
        right: 6px;
        display: flex;
        gap: 8px;
    }

    .view-tools .icon {
        width: 16px;
        height: 16px;
    }

    .message {
        display: flex;
        height: 17px;
        padding: 2px 3px;
        border-top: 1px solid #c9c9cc;
        background: #ebebed;
    }

    .message a {
        display: flex;
        align-items: center;
        gap: 2px;
        padding: 0 4px;
        border: 1px solid #c6c6ca;
        background: #e2e2e5;
    }

    footer {
        display: flex;
        align-items: center;
        gap: 3px;
        height: 16px;
        padding: 0 2px;
        border-top: 1px solid #d8d8db;
        background: #f1f2f4;
    }

    .alerts {
        display: flex;
        align-items: center;
        gap: 6px;
        margin: 0 10px 0 auto;
    }
</style>
